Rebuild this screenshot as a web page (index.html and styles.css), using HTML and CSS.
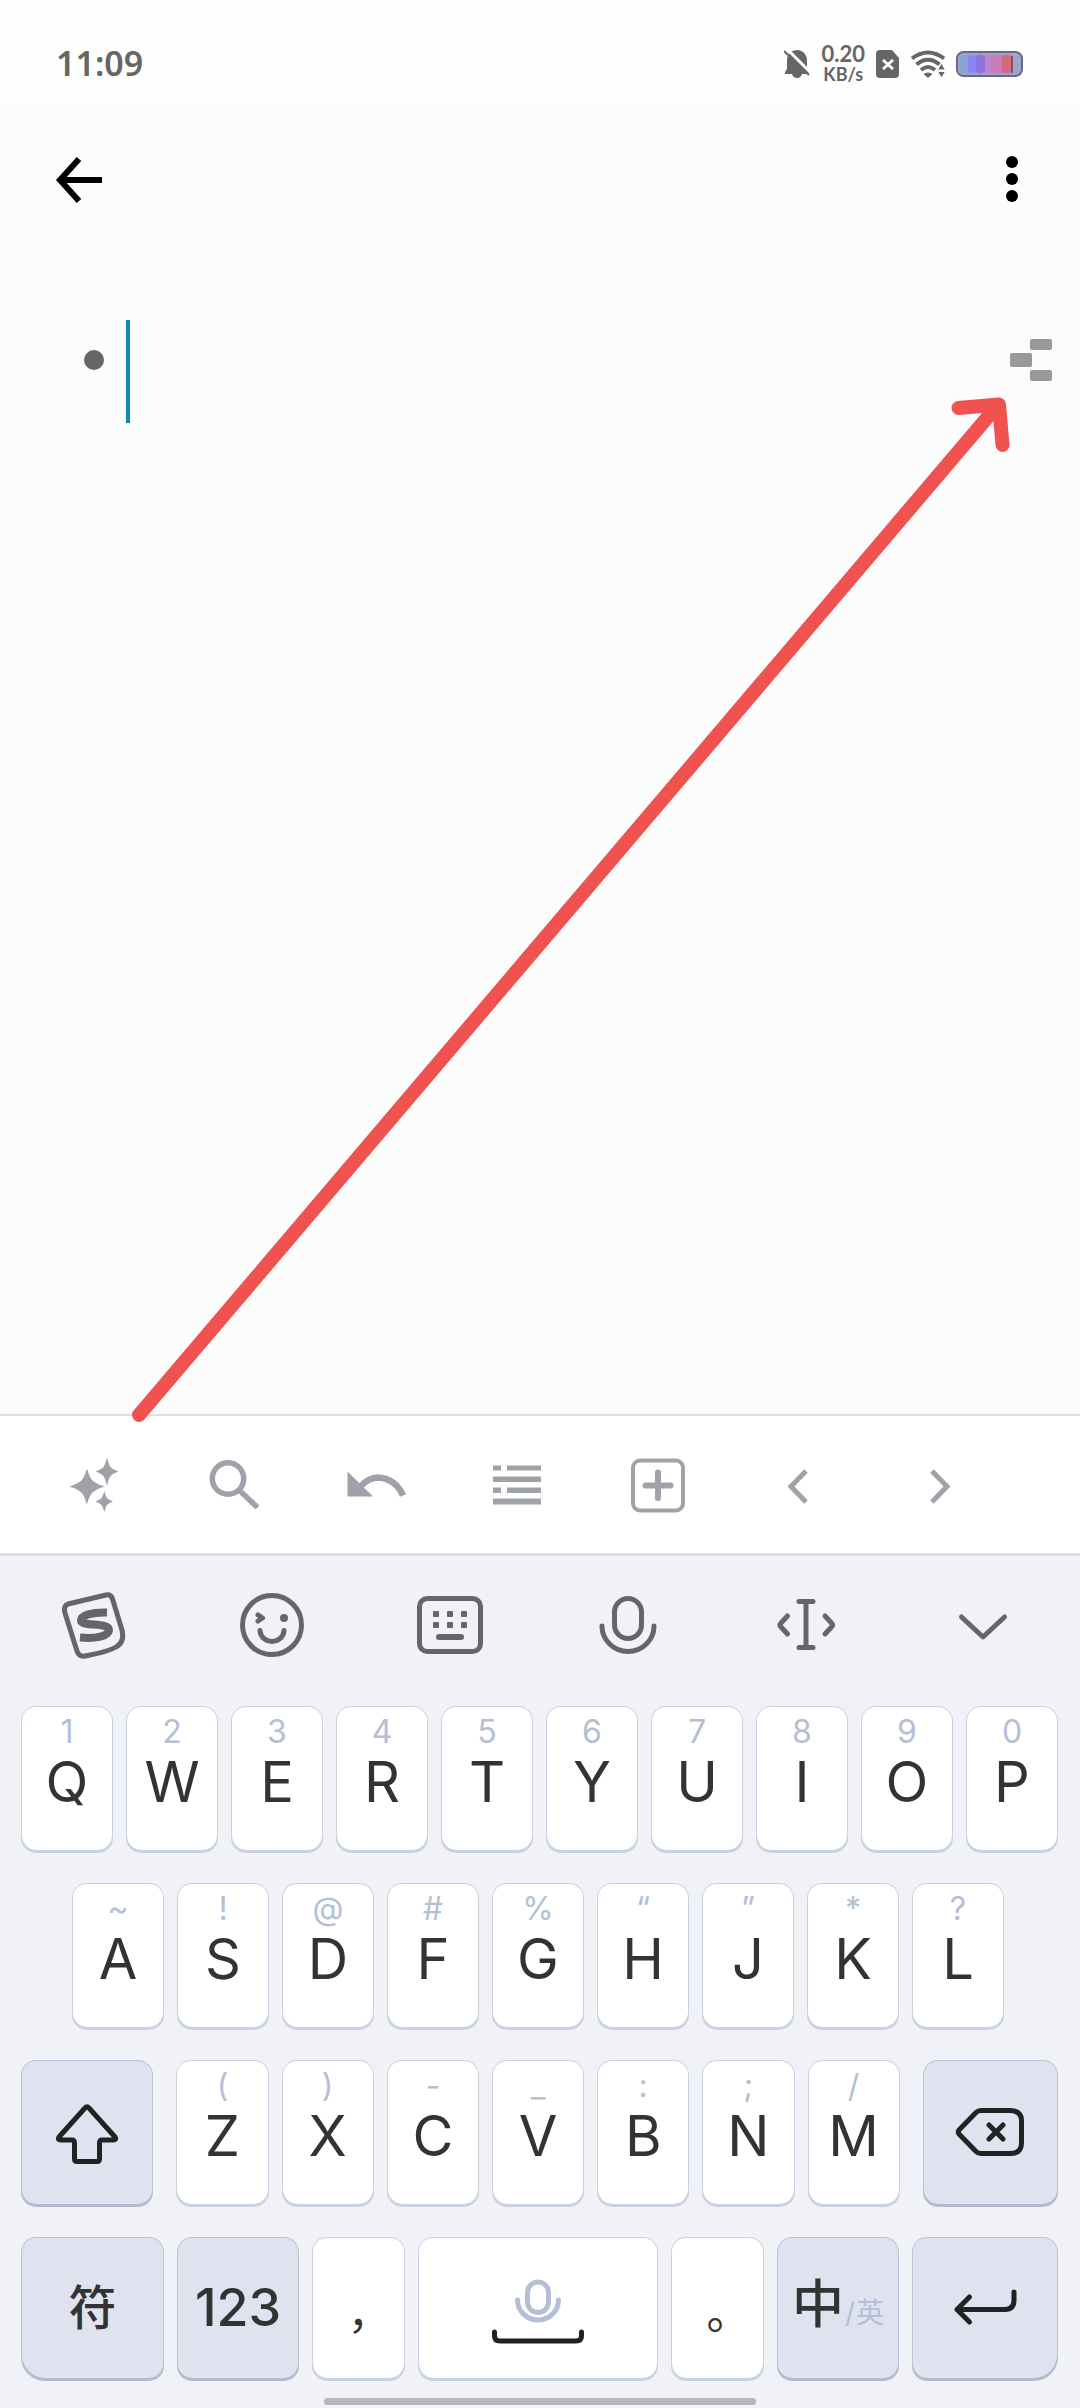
FILE: index.html
```html
<!DOCTYPE html>
<html lang="zh-CN">
<head>
<meta charset="utf-8">
<meta name="viewport" content="width=device-width, initial-scale=1">
<title>大纲</title>
<link rel="stylesheet" href="styles.css">
</head>
<body>
<header class="status">
  <time class="clock">11:09</time>
  <div class="status-icons">
    <svg class="s-bell" viewBox="0 0 26 30" aria-hidden="true">
      <path fill="currentColor" d="M13 1C18 1 23 5 23 11V19L25 24V25H18C17 28 15 29 13 29S9 28 8 25H1V23L3 20V11C3 5 8 1 13 1Z"/>
      <path stroke="#fefefe" stroke-width="3" d="M3 0L27 24"/>
      <path stroke="currentColor" stroke-width="2" d="M0 2L25 26"/>
    </svg>
    <div class="speed"><span class="rate">0.20</span><span class="unit">KB/s</span></div>
    <svg class="s-sim" viewBox="0 0 24 28" aria-hidden="true">
      <path fill="currentColor" d="M4 0H16L23 8V24Q23 28 19 28H4Q0 28 0 24V4Q0 0 4 0Z"/>
      <path stroke="#fefefe" stroke-width="3" d="M7 10L17 19M17 10L7 19"/>
    </svg>
    <svg class="s-wifi" viewBox="0 0 34 28" aria-hidden="true">
      <g fill="none" stroke="currentColor" stroke-width="4"><path d="M1 8.500Q17 -3.500 33 8.500"/><path d="M5.500 14.500Q17 5 28.500 14.500"/><path d="M10 20Q17 14 24 20"/></g>
      <path fill="currentColor" d="M12.500 24Q17 21 21.500 24L17 28Z"/>
      <path fill="currentColor" stroke="#fefefe" stroke-width="1" d="M30.500 13L34.500 20H26.500ZM30.500 28L34.500 21.500H26.500Z"/>
    </svg>
    <svg class="s-battery" viewBox="0 0 67 26" aria-hidden="true">
      <rect x="1" y="1" width="65" height="24" rx="6.500" fill="#9ba6c6" stroke="#656a88" stroke-width="2"/>
      <rect x="4" y="4" width="10" height="18" rx="3" fill="#8ba3d2"/>
      <rect x="28" y="4" width="20" height="18" fill="#c083cf"/>
      <rect x="36" y="4" width="12" height="18" fill="#c87cb8"/>
      <rect x="12" y="4" width="9" height="18" rx="3" fill="#8985fb"/>
      <rect x="20" y="4" width="9" height="18" rx="3" fill="#8c72dc"/>
      <rect x="46" y="4" width="9" height="18" rx="3" fill="#d5687a"/>
      <rect x="55" y="5" width="2" height="17" fill="#8a4d72"/>
    </svg>
  </div>
</header>

<main class="editor">
  <nav class="appbar">
    <button class="plain" type="button" aria-label="返回"><svg class="i52" viewBox="-26 -26 52 52"><path fill="none" stroke="#000" stroke-width="6" d="M-1 -21L-20 0L-1 21M-20 0H22"/></svg></button>
    <button class="plain" type="button" aria-label="更多"><svg class="i52" viewBox="-26 -26 52 52"><circle cy="-18" r="6"/><circle cy="-1" r="6"/><circle cy="16" r="6"/></svg></button>
  </nav>
  <div class="node">
    <span class="bullet"></span>
    <span class="caret"></span>
    <input class="node-text" type="text" aria-label="主题">
    <button class="plain mindmap" type="button" aria-label="思维导图"><svg viewBox="0 0 42 42"><g fill="#999"><rect x="20" width="22" height="11" rx="2"/><rect y="14" width="22" height="14" rx="2"/><rect x="20" y="31" width="22" height="11" rx="2"/></g></svg></button>
  </div>
  <svg class="pointer" viewBox="0 102 1080 1312" aria-hidden="true"><path d="M139 1415L998 405M958.500 408L999 404.500L1002.500 445"/></svg>
</main>

<div class="tools" role="toolbar">
  <button class="plain" type="button" aria-label="AI"><svg class="i64" viewBox="-32 -32 64 64"><path fill="currentColor" d="M-7 -16.500C-3 -4 -2 -3 10.500 1.500C-2 6 -3 7 -7 19.500C-11 7 -12 6 -24.500 1.500C-12 -3 -11 -4 -7 -16.500ZM13 -27.500C16 -17 16 -17 24.500 -13.500C16 -10 16 -10 13 .5C10 -10 10 -10 1.500 -13.500C10 -17 10 -17 13 -27.500ZM10.500 6C12 13 13 14 19 16.500C13 19 12 20 10.500 27C8 20 8 19 1.500 16.500C8 14 8 13 10.500 6Z"/></svg></button>
  <button class="plain" type="button" aria-label="搜索"><svg class="i64" viewBox="-32 -32 64 64"><g fill="none" stroke="currentColor" stroke-width="5.500"><circle cx="-7" cy="-6.500" r="15.700"/><path d="M4 5L22.500 22.500"/></g></svg></button>
  <button class="plain" type="button" aria-label="撤销"><svg class="i64" viewBox="-32 -32 64 64"><path fill="currentColor" d="M-28.500 -13.500V11.500H-3Z"/><path fill="none" stroke="currentColor" stroke-width="6.500" d="M-16 2Q-8 -7 1.500 -7.500C14 -7.500 23 1 27 10.500"/></svg></button>
  <button class="plain" type="button" aria-label="列表"><svg class="i64" viewBox="-32 -32 64 64"><path fill="currentColor" d="M-24 -19.500h8v5h-8zM-10 -19.500h34v5h-34zM-24 -8.500h48v5.500h-48zM-24 2.500h8v5.500h-8zM-10 2.500h34v5.500h-34zM-24 13.500h48v6h-48z"/></svg></button>
  <button class="plain" type="button" aria-label="添加"><svg class="i64" viewBox="-32 -32 64 64"><g fill="none" stroke="currentColor"><rect x="-25" y="-24.500" width="50" height="50" rx="7" stroke-width="4"/><path stroke-width="6" stroke-linecap="round" d="M-12.500 .5H12.500M0 -12.500V13"/></g></svg></button>
  <button class="plain" type="button" aria-label="上一个"><svg class="i64" viewBox="-32 -32 64 64"><path fill="none" stroke="currentColor" stroke-width="5" d="M7 -14L-8 1.500L7 17"/></svg></button>
  <button class="plain" type="button" aria-label="下一个"><svg class="i64" viewBox="-32 -32 64 64"><path fill="none" stroke="currentColor" stroke-width="5" d="M-8 -14L7 1.500L-8 17"/></svg></button>
</div>

<section class="keyboard" aria-label="键盘">
  <div class="ime">
    <button class="plain" type="button" aria-label="搜狗输入法"><svg class="i72" viewBox="-36 -36 72 72"><path stroke-width="5" d="M-26 -21L12 -30Q17 -31 18.500 -26L28 5Q31 17 22 22C14 27 2 29 -9 31Q-15 32 -17 26L-29 -12Q-31 -19 -26 -21Z"/><path stroke-width="8" stroke-linecap="butt" d="M13 -12.500C-2 -13 -13 -9.500 -13 -4.500C-13 2 15 -3 15 5C15 11 2 14 -14 12.500"/></svg></button>
    <button class="plain" type="button" aria-label="表情"><svg class="i72" viewBox="-36 -36 72 72"><circle r="29.500"/><circle cx="12" cy="-7" r="4" fill="currentColor" stroke="none"/><path d="M-14 -10L-9.500 -7L-14 -4M-12 5.500C-11 20 11 20 12 5.500"/></svg></button>
    <button class="plain" type="button" aria-label="键盘布局"><svg class="i72" viewBox="-36 -36 72 72"><rect x="-30.500" y="-26.500" width="61" height="53" rx="8"/><g fill="currentColor" stroke="none"><rect x="-17" y="-14" width="6" height="6" rx="1"/><rect x="-3" y="-14" width="6" height="6" rx="1"/><rect x="11" y="-14" width="6" height="6" rx="1"/><rect x="-17" y="-3" width="6" height="6" rx="1"/><rect x="-3" y="-3" width="6" height="6" rx="1"/><rect x="11" y="-3" width="6" height="6" rx="1"/></g><path stroke-width="6" d="M-11 12H11"/></svg></button>
    <button class="plain" type="button" aria-label="语音"><svg class="i72" viewBox="-36 -36 72 72"><rect x="-13.500" y="-26.500" width="27" height="40" rx="13.500"/><path d="M-26 1A26 25.500 0 0 0 26 1"/></svg></button>
    <button class="plain" type="button" aria-label="移动光标"><svg class="i72" viewBox="-36 -36 72 72"><path d="M-7 -23.500H7M-7 22.500H7M0 -23.500V22.500M-18.500 -9L-25 -2Q-27 0 -25 2L-18.500 9M19 -9L25.500 -2Q27.500 0 25.500 2L19 9"/></svg></button>
    <button class="plain" type="button" aria-label="收起键盘"><svg class="i72" viewBox="-36 -36 72 72"><path d="M-22.500 -8L-1 12L20.500 -8"/></svg></button>
  </div>

  <div class="rows">
    <div class="row">
      <button class="key" type="button"><small>1</small>Q</button>
      <button class="key" type="button"><small>2</small>W</button>
      <button class="key" type="button"><small>3</small>E</button>
      <button class="key" type="button"><small>4</small>R</button>
      <button class="key" type="button"><small>5</small>T</button>
      <button class="key" type="button"><small>6</small>Y</button>
      <button class="key" type="button"><small>7</small>U</button>
      <button class="key" type="button"><small>8</small>I</button>
      <button class="key" type="button"><small>9</small>O</button>
      <button class="key" type="button"><small>0</small>P</button>
    </div>
    <div class="row row-inset">
      <button class="key" type="button"><small>~</small>A</button>
      <button class="key" type="button"><small>!</small>S</button>
      <button class="key" type="button"><small>@</small>D</button>
      <button class="key" type="button"><small>#</small>F</button>
      <button class="key" type="button"><small>%</small>G</button>
      <button class="key" type="button"><small>“</small>H</button>
      <button class="key" type="button"><small>”</small>J</button>
      <button class="key" type="button"><small>*</small>K</button>
      <button class="key" type="button"><small>?</small>L</button>
    </div>
    <div class="row">
      <button class="key fn shift" type="button" aria-label="Shift"><svg class="i72" viewBox="-36 -36 72 72"><path d="M-2 -25Q0 -27.500 2 -25L28 4Q30 7 26.500 7H15Q12.500 7 12.500 10V26Q12.500 28.500 10 28.500H-10Q-12.500 28.500 -12.500 26V10Q-12.500 7 -15 7H-26.500Q-30 7 -28 4Z"/></svg></button>
      <button class="key" type="button"><small>(</small>Z</button>
      <button class="key" type="button"><small>)</small>X</button>
      <button class="key" type="button"><small>-</small>C</button>
      <button class="key" type="button"><small>_</small>V</button>
      <button class="key" type="button"><small>:</small>B</button>
      <button class="key" type="button"><small>;</small>N</button>
      <button class="key" type="button"><small>/</small>M</button>
      <button class="key fn delete" type="button" aria-label="删除"><svg class="i72" viewBox="-36 -36 72 72"><path d="M-9 -22.500H20Q31.500 -22.500 31.500 -12V10Q31.500 20.500 20 20.500H-9Q-12 20.500 -14 18.500L-31 1Q-32.500 -1 -31 -3L-14 -20.500Q-12 -22.500 -9 -22.500ZM-1 -8L13 6M13 -8L-1 6"/></svg></button>
    </div>
    <div class="row row-last">
      <button class="key fn symbols" type="button">符</button>
      <button class="key fn numbers" type="button">123</button>
      <button class="key punct" type="button">，</button>
      <button class="key space" type="button" aria-label="空格"><svg class="i100" viewBox="-50 -36 100 72"><g stroke="#b4bfd6"><rect x="-10.500" y="-26" width="21" height="30.500" rx="10.500"/><path d="M-20.500 -8A20.500 20 0 0 0 20.500 -8"/></g><path d="M-43.500 24V28Q-43.500 33 -38 33H38Q43.500 33 43.500 28V24"/></svg></button>
      <button class="key punct" type="button">。</button>
      <button class="key fn lang" type="button"><span>中</span><span class="alt">/</span><span class="alt">英</span></button>
      <button class="key fn enter" type="button" aria-label="换行"><svg class="i72" viewBox="-36 -36 72 72"><path d="M29 -16V-8Q29 1.500 20 1.500H-28M-15.500 -11L-28 1.500L-15.500 14"/></svg></button>
    </div>
  </div>
  <div class="home"></div>
</section>
</body>
</html>
```
FILE: styles.css
```css
* { box-sizing: border-box; }

body {
  margin: 0;
  min-height: 100vh;
  display: flex;
  flex-direction: column;
  background: #fff;
  color: #333;
  font-family: Inter, "Noto Sans CJK SC", sans-serif;
}

svg { display: block; flex: none; }

button {
  margin: 0;
  padding: 0;
  border: 0;
  background: none;
  color: inherit;
  font: inherit;
}

.plain {
  display: flex;
  align-items: center;
  justify-content: center;
}

.i52 { width: 52px; height: 52px; }
.i64 { width: 64px; height: 64px; }
.i72 { width: 72px; height: 72px; }
.i100 { width: 100px; height: 72px; }

/* status bar */
.status {
  height: 102px;
  padding: 26px 57px 0 56px;
  display: flex;
  align-items: flex-start;
  justify-content: space-between;
  background: #fefefe;
  color: #666;
  font-family: "Noto Sans", sans-serif;
  font-weight: 600;
}

.clock { font-size: 34px; line-height: 74px; }

.status-icons {
  height: 76px;
  display: flex;
  align-items: center;
  gap: 11px;
}

.s-bell { width: 26px; height: 30px; }
.s-sim { width: 24px; height: 28px; }
.s-wifi { width: 34px; height: 28px; }
.s-battery { width: 67px; height: 26px; }

.speed {
  display: flex;
  flex-direction: column;
  align-items: center;
  font-family: Lato, sans-serif;
  font-weight: 700;
}
.rate { font-size: 22px; line-height: 20px; }
.unit { font-size: 18px; line-height: 20px; }

/* outline editor */
.editor {
  position: relative;
  z-index: 1;
  flex: 1;
  background: #fcfcfc;
}

.appbar {
  height: 156px;
  padding: 0 42px 0 54px;
  display: flex;
  align-items: center;
  justify-content: space-between;
}

.node {
  margin-top: 62px;
  padding: 0 28px 0 84px;
  display: flex;
  align-items: flex-start;
}

.bullet {
  width: 20px;
  height: 20px;
  margin: 30px 22px 30px 0;
  border-radius: 50%;
  background: #666;
}

.caret {
  width: 4px;
  height: 103px;
  background: #0f8abf;
}

.node-text {
  flex: 1;
  min-width: 0;
  height: 80px;
  padding: 0;
  border: 0;
  outline: 0;
  background: none;
  font: inherit;
  font-size: 48px;
}

.mindmap { height: 80px; }
.mindmap svg { width: 42px; height: 42px; }

.pointer {
  position: absolute;
  inset: 0;
  width: 100%;
  height: 100%;
  overflow: visible;
  pointer-events: none;
  fill: none;
  stroke: #f0524f;
  stroke-width: 14px;
  stroke-linecap: round;
  stroke-linejoin: round;
}

/* editing toolbar */
.tools {
  height: 142px;
  padding: 0 69px 0 23px;
  display: flex;
  border-top: 2px solid #dfe0e1;
  border-bottom: 3px solid #dcdee2;
  color: #a0a2a9;
}
.tools .plain { flex: 1; }

/* keyboard */
.keyboard {
  background: #f0f2f7;
}

.ime {
  height: 138px;
  padding: 0 7px 0 5px;
  display: flex;
  color: #65666a;
}
.ime .plain { flex: 1; }

.ime svg, .key svg {
  fill: none;
  stroke: currentColor;
  stroke-width: 5px;
  stroke-linecap: round;
  stroke-linejoin: round;
}

.rows {
  padding: 12px 22px 0 21px;
  display: flex;
  flex-direction: column;
  gap: 33px;
}

.row {
  height: 144px;
  display: flex;
  gap: 13px;
}
.row-inset { padding: 0 54px 0 51px; }
.row-last { height: 141px; }

.key {
  flex: 92 1 0;
  min-width: 0;
  padding-top: 9px;
  display: flex;
  flex-direction: column;
  align-items: center;
  border: 1px solid #ccd1de;
  border-bottom: 0;
  border-radius: 15px;
  background: #fff;
  box-shadow: 0 3px 0 #cad2e0;
  font-size: 56px;
  line-height: 68px;
}

.key small {
  color: #b4bfd6;
  font-size: 32px;
  line-height: 32px;
}

.fn, .space, .punct {
  padding: 0;
  justify-content: center;
}

.fn {
  border-color: #bcc4d6;
  background: #dee3ef;
  box-shadow: 0 3px 0 #b3bbd0;
}

.fn svg, .space svg { color: #222; }

.shift { flex-grow: 133; margin-right: 10px; }
.delete { flex-grow: 136; margin-left: 10px; }

.symbols {
  flex-grow: 143;
  font-size: 48px;
  font-weight: 500;
  border-bottom-left-radius: 24px;
}
.numbers {
  flex-grow: 122;
  font-size: 52px;
  font-weight: 500;
}
.space { flex-grow: 242; }
.enter { flex-grow: 146; border-bottom-right-radius: 24px; }

.punct {
  padding-top: 4px;
  font-family: "Noto Sans CJK SC", sans-serif;
  font-size: 44px;
  font-feature-settings: "halt";
}

.lang {
  flex-grow: 122;
  flex-direction: row;
  align-items: baseline;
  gap: 1px;
  padding-top: 33px;
  font-size: 52px;
  font-weight: 500;
}
.alt {
  color: #b4bfd6;
  font-size: 28px;
  font-weight: 400;
}

.home {
  width: 40%;
  height: 7px;
  margin: 20px auto 3px;
  border-radius: 4px;
  background: #b6b7bb;
}
```
